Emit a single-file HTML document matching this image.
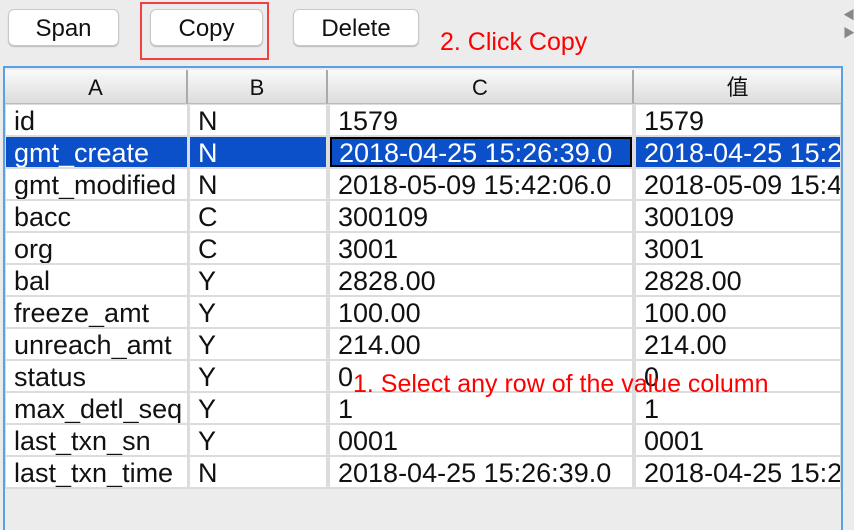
<!DOCTYPE html><html><head><meta charset="utf-8"><style>
html,body{margin:0;width:854px;height:530px;overflow:hidden}
body{background:#ececec;position:relative;font-family:"Liberation Sans","Noto Sans CJK SC",sans-serif}
.btn{position:absolute;top:9px;height:37px;border:1px solid #c8c8c8;border-radius:6px;background:#fff;font-size:24px;line-height:37px;text-align:center;color:#111;box-shadow:0 1px 1px #bbb;box-sizing:border-box}
.red{position:absolute;color:#f00;font-size:25px}
#tbl{position:absolute;left:3px;top:66px;width:840px;height:470px;border:2px solid #5aa0e6;border-bottom:none;box-sizing:border-box;background:#ececec}
.hd{position:absolute;top:70px;height:34px;background:linear-gradient(#fafafa,#dcdcdc);font-size:22px;line-height:36px;text-align:center;color:#111;border-bottom:1px solid #bbb;box-sizing:border-box}
.c{position:absolute;height:30px;background:#fff;font-size:27px;line-height:32px;padding-left:8px;box-sizing:border-box;white-space:nowrap;overflow:hidden;color:#111}
.s{background:#0b50c8;color:#fff}
.grid{position:absolute;left:5px;top:104px;width:836px;height:385px;background:#dcdcdc}
</style></head><body>
<div class="btn" style="left:8px;width:111px">Span</div>
<div class="btn" style="left:150px;width:113px">Copy</div>
<div style="position:absolute;left:140px;top:2px;width:129px;height:58px;border:2px solid #f04040;box-sizing:border-box"></div>
<div class="btn" style="left:293px;width:126px">Delete</div>
<div class="red" style="left:440px;top:28px">2. Click Copy</div>
<div style="position:absolute;left:843px;top:6px;color:#888;font-size:12px;line-height:18px">◀<br>▶</div>
<div id="tbl"></div>
<div class="grid"></div>
<div class="hd" style="left:5px;width:183px;border-right:2px solid #aaa">A</div>
<div class="hd" style="left:188px;width:140px;border-right:2px solid #aaa">B</div>
<div class="hd" style="left:328px;width:306px;border-right:2px solid #aaa">C</div>
<div class="hd" style="left:634px;width:207px">值</div>
<div id="rows"></div>
<script>
var d=[["id","N","1579"],["gmt_create","N","2018-04-25 15:26:39.0"],["gmt_modified","N","2018-05-09 15:42:06.0"],["bacc","C","300109"],["org","C","3001"],["bal","Y","2828.00"],["freeze_amt","Y","100.00"],["unreach_amt","Y","214.00"],["status","Y","0"],["max_detl_seq","Y","1"],["last_txn_sn","Y","0001"],["last_txn_time","N","2018-04-25 15:26:39.0"]];
var cols=[[6,181],[190,136],[330,302],[636,204]],h="";
d.forEach(function(r,i){var t=105+32*i;var v=[r[0],r[1],r[2],r[2]];
for(var j=0;j<4;j++){var sel=i==1;var st="left:"+cols[j][0]+"px;top:"+t+"px;width:"+cols[j][1]+"px;";
if(sel&&j==2)st+="border:2px solid #000;padding-left:7px;line-height:28px;";
h+='<div class="c'+(sel?' s':'')+'" style="'+st+'">'+v[j]+'</div>';}});
document.getElementById('rows').innerHTML=h;
</script>
<div class="red" style="left:353px;top:370px">1. Select any row of the value column</div>
</body></html>
